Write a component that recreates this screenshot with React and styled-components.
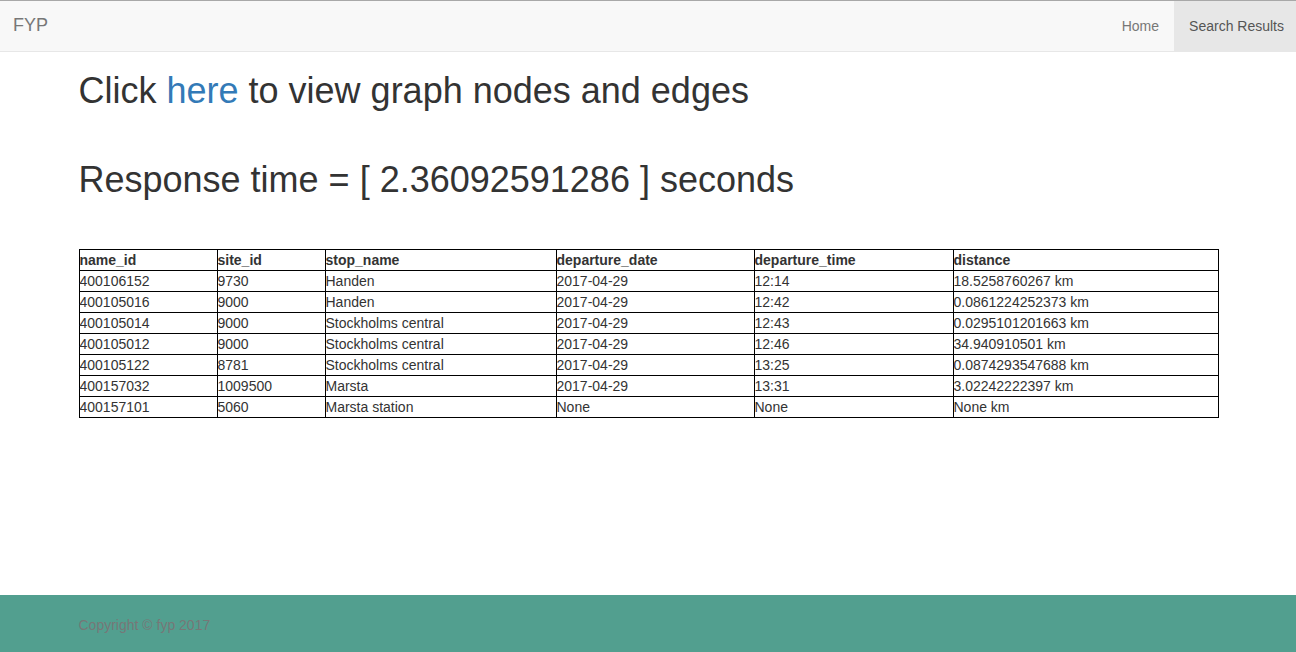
import React from "react";
import styled, { createGlobalStyle } from "styled-components";

const Global = createGlobalStyle`
  html, body { margin: 0; padding: 0; }
  body {
    font-family: "Liberation Sans", Arial, sans-serif;
    font-size: 14px;
    line-height: 1.42857143;
    color: #333;
    background: #fff;
  }
`;

const Page = styled.div`
  min-height: 100vh;
  display: flex;
  flex-direction: column;
`;

const Navbar = styled.nav`
  display: flex;
  align-items: stretch;
  justify-content: space-between;
  height: 50px;
  background: #f8f8f8;
  border-top: 1px solid #a8a8a8;
  border-bottom: 1px solid #e7e7e7;
`;

const Brand = styled.a`
  display: flex;
  align-items: center;
  padding: 0 13px;
  font-size: 18px;
  color: #777;
  text-decoration: none;
`;

const NavList = styled.ul`
  display: flex;
  margin: 0;
  padding: 0;
  list-style: none;
`;

const NavLink = styled.a`
  display: flex;
  align-items: center;
  height: 100%;
  padding: 0 ${(p) => (p.$last ? "12px" : "15px")} 0 15px;
  color: ${(p) => (p.$active ? "#555" : "#777")};
  background: ${(p) => (p.$active ? "#e7e7e7" : "transparent")};
  text-decoration: none;
  box-sizing: border-box;
`;

const Container = styled.main`
  width: 1140px;
  margin: 0 auto;
  padding: 0 15px 0 16px;
  box-sizing: content-box;
`;

const Heading = styled.h1`
  font-size: 36px;
  font-weight: 500;
  line-height: 1.1;
  margin: ${(p) => p.$margin};
  color: #333;
`;

const Link = styled.a`
  color: #337ab7;
  text-decoration: none;
`;

const Table = styled.table`
  width: 1139px;
  margin-top: 50px;
  border-collapse: collapse;
  table-layout: fixed;
  border: 1px solid #000;
  margin-bottom: 20px;
`;

const Th = styled.th`
  text-align: left;
  font-weight: bold;
  padding: 0;
  border: 1px solid #000;
  line-height: 20px;
  white-space: nowrap;
`;

const Td = styled.td`
  padding: 0;
  border: 1px solid #000;
  line-height: 20px;
  white-space: nowrap;
`;

const Col = styled.col`
  width: ${(p) => p.$w}px;
`;

const Footer = styled.footer`
  margin-top: auto;
  height: 57px;
  background: #529f8f;
  display: flex;
  align-items: center;
`;

const FooterInner = styled.div`
  width: 1140px;
  margin: 0 auto;
  padding: 2px 15px 0 16px;
  box-sizing: content-box;
  color: #777;
  font-size: 14px;
`;

const cols = [
  ["name_id", 138],
  ["site_id", 108],
  ["stop_name", 231],
  ["departure_date", 198],
  ["departure_time", 199],
  ["distance", 265],
];

const rows = [
  ["400106152", "9730", "Handen", "2017-04-29", "12:14", "18.5258760267 km"],
  ["400105016", "9000", "Handen", "2017-04-29", "12:42", "0.0861224252373 km"],
  ["400105014", "9000", "Stockholms central", "2017-04-29", "12:43", "0.0295101201663 km"],
  ["400105012", "9000", "Stockholms central", "2017-04-29", "12:46", "34.940910501 km"],
  ["400105122", "8781", "Stockholms central", "2017-04-29", "13:25", "0.0874293547688 km"],
  ["400157032", "1009500", "Marsta", "2017-04-29", "13:31", "3.02242222397 km"],
  ["400157101", "5060", "Marsta station", "None", "None", "None km"],
];

export default function App() {
  return (
    <Page>
      <Global />
      <Navbar>
        <Brand href="#">FYP</Brand>
        <NavList>
          <li><NavLink href="#">Home</NavLink></li>
          <li><NavLink href="#" $active $last>Search Results</NavLink></li>
        </NavList>
      </Navbar>
      <Container>
        <Heading $margin="19px 0 0">
          Click <Link href="#">here</Link> to view graph nodes and edges
        </Heading>
        <Heading $margin="49px 0 0">Response time = [ 2.36092591286 ] seconds</Heading>
        <Table>
          <colgroup>
            {cols.map(([n, w]) => (
              <Col key={n} $w={w} />
            ))}
          </colgroup>
          <thead>
            <tr>
              {cols.map(([n]) => (
                <Th key={n}>{n}</Th>
              ))}
            </tr>
          </thead>
          <tbody>
            {rows.map((r, i) => (
              <tr key={i}>
                {r.map((c, j) => (
                  <Td key={j}>{c}</Td>
                ))}
              </tr>
            ))}
          </tbody>
        </Table>
      </Container>
      <Footer>
        <FooterInner>Copyright © fyp 2017</FooterInner>
      </Footer>
    </Page>
  );
}
